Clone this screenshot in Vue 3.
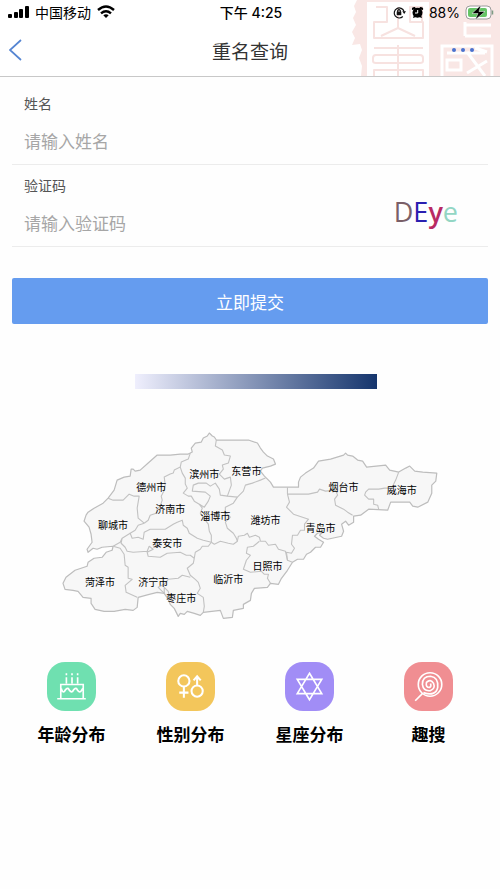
<template>
  <div class="page">
    <header class="header">
      <svg class="seal" viewBox="0 0 160 76" aria-hidden="true">
        <path d="M23 0H160V76H21L22 66L19 58L22 50L20 44L12 45L15 38L12 32L16 25L13 18L16 12L14 6L17 0Z" fill="#f9e7e5" />
        <path d="M27 2H89V76H27Z" fill="#fff" />
        <g fill="none" stroke="#f7e2e0" stroke-width="2" stroke-linejoin="round">
          <path d="M36 7H47V22H34V38H83V22H70V7H82V22M58 7V28L41 36M58 28L75 36" />
          <path d="M34 48H83M58 45V76M36 55H80Q83 55 83 58V61Q83 63 80 63H36Q33 63 33 61V58Q33 55 36 55M34 76V70H83V76" />
        </g>
        <g fill="none" stroke="#fff" stroke-width="3">
          <path d="M125 22V36M125 25H151M125 36H151" />
          <path d="M102 76V46H152V76M107 53H145M107 60H121V70H107ZM127 52L145 76M147 61L127 73M135 48L147 52" />
        </g>
      </svg>

      <div class="status">
        <div class="status-left">
          <svg width="21" height="14" viewBox="0 0 21 14" aria-hidden="true">
            <rect x="0" y="9" width="4" height="4" rx="1" />
            <rect x="6" y="7" width="4" height="6" rx="1" />
            <rect x="11" y="4" width="4" height="9" rx="1" />
            <rect x="17" y="1" width="4" height="12" rx="1" />
          </svg>
          <span>中国移动</span>
          <svg width="18" height="14" viewBox="0 0 18 14" fill="none" stroke="#000" stroke-width="2.4" aria-hidden="true">
            <path d="M1 5Q9-2 17 5M4 8.3Q9 4 14 8.3" />
            <path d="M9 13L6.3 10.3Q9 8.3 11.7 10.3Z" fill="#000" stroke="none" />
          </svg>
        </div>
        <div class="status-time">下午 4:25</div>
        <div class="status-right">
          <svg width="13" height="13" viewBox="0 0 13 13" fill="none" stroke="#111" stroke-width="1.2" aria-hidden="true">
            <path d="M9.8 10.5A5 5 0 1 1 11 5.5" />
            <path d="M9.3 5.3H13L11.2 8Z" fill="#111" stroke="none" />
            <rect x="3.7" y="5.6" width="4.6" height="3.6" fill="#111" stroke="none" />
            <path d="M4.7 6V4.6Q6 2.6 7.3 4.6V6" />
          </svg>
          <svg width="13" height="13" viewBox="0 0 13 13" aria-hidden="true">
            <circle cx="6.5" cy="6.8" r="5" />
            <path d="M1 4Q0 1 4 1L5 3ZM12 4Q13 1 9 1L8 3ZM2 12L3 9L5 11ZM11 12L10 9L8 11Z" />
            <path d="M6.7 4V7H4" fill="none" stroke="#fff" />
          </svg>
          <span>88%</span>
          <svg width="29" height="15" viewBox="0 0 29 15" aria-hidden="true">
            <rect x="1" y="1" width="25" height="13" rx="4" fill="#fff" stroke="#9b9b9b" />
            <rect x="3" y="3" width="19" height="9" rx="2" fill="#65c466" />
            <path d="M27.5 5.5V9.5" stroke="#7d9c84" stroke-width="1.5" />
            <path d="M16 0L7 8.5H13L10 15L20 6.5H14Z" stroke="#fff" stroke-width=".5" />
          </svg>
        </div>
      </div>

      <div class="nav">
        <button class="nav-btn" type="button" aria-label="返回">
          <svg width="14" height="22" viewBox="0 0 14 22" fill="none" stroke="#5585d2" stroke-width="1.7" aria-hidden="true">
            <path d="M12 1L1 11L12 21" />
          </svg>
        </button>
        <h1>重名查询</h1>
        <button class="nav-btn more" type="button" aria-label="更多">
          <svg width="24" height="6" viewBox="0 0 24 6" fill="#4a72cf" aria-hidden="true">
            <circle cx="3" cy="3" r="2" />
            <circle cx="12" cy="3" r="2" />
            <circle cx="21" cy="3" r="2" />
          </svg>
        </button>
      </div>
    </header>

    <main>
      <form @submit.prevent>
        <div class="field">
          <label for="name">姓名</label>
          <input id="name" v-model="name" type="text" placeholder="请输入姓名" />
        </div>
        <div class="field code-field">
          <div class="field-main">
            <label for="code">验证码</label>
            <input id="code" v-model="code" type="text" placeholder="请输入验证码" />
          </div>
          <button class="captcha" type="button">
            <span class="c1">D</span><span class="c2">E</span><span class="c3">y</span><span class="c4">e</span>
          </button>
        </div>
        <button class="submit" type="submit">立即提交</button>
      </form>

      <div class="legend">
        <div class="legend-bar"></div>
      </div>

      <svg class="map" viewBox="60 425 380 200" role="img" aria-label="山东省">
        <path class="land" :d="outline" />
        <path v-for="(b, i) in borders" :key="i" class="border" :d="b" />
        <text v-for="c in cities" :key="c.name" :x="c.x" :y="c.y">{{ c.name }}</text>
      </svg>

      <nav class="menu">
        <a v-for="m in menu" :key="m.label" href="#" class="menu-item">
          <span class="menu-icon" :class="m.icon">
            <svg v-if="m.icon === 'cake'" viewBox="0 0 48 48">
              <path d="M10 36H38M13.5 36V22H35.5V36M14 26Q15 30 17 29Q19 25 21 26Q23 30 25 29Q27 25 29 26Q31 30 33 29L35 26M19 21V15M24.5 21V15M30 21V15" />
              <path d="M19 11V13M24.5 11V13M30 11V13" />
            </svg>
            <svg v-else-if="m.icon === 'gender'" viewBox="0 0 48 48">
              <g stroke-width="2">
                <circle cx="17.5" cy="18.5" r="5.5" />
                <circle cx="30.5" cy="28.5" r="5.5" />
                <path d="M17.5 24V35M13 30H22M30.5 23V15M27 18L30.5 14L34 18" />
              </g>
            </svg>
            <svg v-else-if="m.icon === 'star'" viewBox="0 0 48 48">
              <path d="M24 11L36 31H12ZM24 37L12 17H36Z" />
            </svg>
            <svg v-else viewBox="0 0 48 48">
              <circle cx="25.5" cy="22" r="11.5" />
              <path d="M18 31L11 38M19 30Q31 34 33 25Q34 15 26 14Q18 14 18 22Q19 29 26 28Q31 26 29 21Q26 16 22 20Q21 25 25 25Q27 24 26 21" />
            </svg>
          </span>
          <span class="menu-label">{{ m.label }}</span>
        </a>
      </nav>
    </main>
  </div>
</template>

<script setup>
import { ref } from 'vue'

const name = ref('')
const code = ref('')

const outline =
  'M157 455L170 455L180 454L188 454L192 452L191 448L195 443L201 442L203 438L207 436L209 433L212 436L214 437L216 440L222 440L248 440L257 443L260 448L263 452L267 456L273 459L275 464L270 466L262 468L260 471L264 476L270 482L273 487L298 487L298 482L300 477L305 473L313 468L318 461L330 459L343 455L345 453L347 455L352 456L357 460L362 461L366 467L385 465L389 470L398 472L405 468L409 466L414 471L422 472L436 473L435 481L431 485L431 493L427 502L417 507L412 506L409 502L390 502L387 510L368 509L360 515L353 516L353 522L348 525L345 521L341 524L343 531L341 536L327 539L323 538L319 535L322 532L317 533L314 536L318 539L323 542L320 547L315 547L310 552L306 554L303 559L297 559L292 562L287 570L281 578L278 584L270 583L267 587L254 588L251 593L250 600L243 604L243 608L233 610L232 617L223 618L220 610L203 612L200 615L194 613L187 611L184 614L180 613L178 616L174 608L170 604L168 599L164 593L157 592L149 594L138 597L137 607L133 610L125 609L114 611L104 611L95 609L91 603L91 598L83 597L78 591L73 590L65 589L63 583L66 577L75 570L87 566L88 562L94 558L102 557L106 552L112 550L113 546L102 547L97 549L93 548L88 552L87 549L92 542L91 534L89 527L84 521L86 515L88 512L94 508L103 503L108 498L114 490L117 480L124 477L130 476L131 469L133 469L135 471L140 470L148 463Z'

const borders = [
  'M108 498L113 500L123 500L129 494L134 496L139 496L137 508L138 518L144 523',
  'M144 523L148 520L150 515L156 513L157 509L160 506L162 500L161 496L164 490L165 485L164 477L170 474L173 473L174 470L180 467L181 462L188 459L190 453',
  'M180 467L182 473L185 478L185 484L187 488L183 493L188 496L191 496L194 501L199 504L204 507L208 501L210 496L205 492L192 491L193 485L198 483L206 483L210 486L215 483L219 489L220 495L227 496',
  'M199 504L202 508L200 513L205 520L208 524L209 531L211 535L211 542',
  'M216 440L215 446L222 450L224 455L230 456L228 463L222 465L223 469L219 474L224 479L230 477L231 485L227 496L237 497L243 491L245 485L252 483L260 480L265 478',
  'M237 497L233 503L225 507L225 512L230 517L225 522L227 528L233 533L236 538L237 541L233 544L228 543L220 541L214 544L211 542',
  'M237 541L238 536L244 535L247 533L249 537L255 535L259 537L260 541L265 541L268 545L275 544L278 549L285 551L287 560L292 562M259 541L253 546L247 547L246 553L250 555L246 560L243 569L250 572L261 571L264 574L268 574L267 578L270 583',
  'M287 560L286 552L291 553L294 548L291 544L292 535L297 535L300 530L304 530L304 524L308 519L302 517L293 514L286 507L289 502L287 494L287 487M287 494L308 494L317 492L319 489L325 491L335 490L337 495L334 499L335 505L343 509L347 512L352 515',
  'M398 472L395 480L391 488L384 488L378 489L368 489L365 492L364 495L368 499L373 499L373 504L377 505L378 509',
  'M144 523L138 525L135 530L130 533L132 538L138 537L143 539L144 532L150 529L158 529L165 529L173 524L177 522L182 520L183 525L187 528L189 533L197 538L203 540L211 542',
  'M130 533L122 538L120 542L113 546M122 538L121 543L125 547L127 551L133 552L147 551L149 546L153 549L147 552L148 556L160 557L167 553L180 552L186 555L190 555L194 558L195 552L200 549L202 546L208 546L211 542M113 546L120 548L124 554L125 565L128 567L128 578L132 579L125 585L126 592L137 597',
  'M194 558L193 563L187 568L190 575L195 579L198 582L200 588L197 593L203 597L204 606L203 612M190 577L182 575L178 578L168 579L164 584L158 587L164 593L164 587L168 591L170 600'
]

const cities = [
  { name: '滨州市', x: 204, y: 478 },
  { name: '东营市', x: 246, y: 475 },
  { name: '德州市', x: 151, y: 491 },
  { name: '烟台市', x: 343, y: 491 },
  { name: '威海市', x: 401, y: 494 },
  { name: '济南市', x: 170, y: 513 },
  { name: '淄博市', x: 215, y: 520 },
  { name: '潍坊市', x: 265, y: 524 },
  { name: '聊城市', x: 113, y: 529 },
  { name: '青岛市', x: 320, y: 532 },
  { name: '泰安市', x: 167, y: 547 },
  { name: '日照市', x: 267, y: 570 },
  { name: '菏泽市', x: 100, y: 586 },
  { name: '济宁市', x: 153, y: 586 },
  { name: '临沂市', x: 228, y: 583 },
  { name: '枣庄市', x: 181, y: 602 }
]

const menu = [
  { label: '年龄分布', icon: 'cake' },
  { label: '性别分布', icon: 'gender' },
  { label: '星座分布', icon: 'star' },
  { label: '趣搜', icon: 'candy' }
]
</script>

<style>
body {
  margin: 0;
  background: #fefefe;
}
</style>

<style scoped>
.page {
  font-family: Inter, "Noto Sans CJK SC", sans-serif;
  color: #333;
}
button, input {
  font-family: inherit;
  border: none;
  background: transparent;
  padding: 0;
}
svg { display: block }

.header {
  position: relative;
  background: #fff;
  border-bottom: 1px solid #c8c8c8;
}
.seal {
  position: absolute;
  right: 0;
  top: 0;
  width: 160px;
  height: 100%;
}
.status {
  position: relative;
  display: grid;
  grid-template-columns: 1fr auto 1fr;
  align-items: center;
  height: 24px;
  padding: 0 6px 0 8px;
  font-size: 14px;
  color: #000;
}
.status-left, .status-right {
  display: flex;
  align-items: center;
  gap: 6px;
}
.status-right { justify-content: flex-end; gap: 5px }
.status-time { font-weight: 500 }
.nav {
  position: relative;
  display: grid;
  grid-template-columns: 1fr auto 1fr;
  align-items: center;
  height: 52px;
  padding: 0 9px;
}
.nav-btn {
  display: flex;
  align-items: center;
  width: 44px;
  height: 44px;
  cursor: pointer;
}
.nav-btn.more {
  width: 40px;
  justify-self: end;
}
h1 {
  margin: 0;
  font-size: 19px;
  font-weight: 400;
}

main { padding: 0 12px }
.field {
  padding: 16px 12px 7px;
  border-bottom: 1px solid #ececec;
}
.code-field {
  display: flex;
  align-items: center;
  padding-top: 10px;
}
.field-main { flex: 1 }
label {
  display: block;
  line-height: 22px;
  font-size: 14px;
  color: #555;
}
input {
  display: block;
  width: 100%;
  height: 30px;
  margin-top: 12px;
  font-size: 17px;
  color: #333;
  outline: none;
}
input::placeholder { color: #a6a6a6; opacity: 1 }
.captcha {
  display: flex;
  margin-top: 10px;
  margin-right: 18px;
  font-family: "Open Sans", sans-serif;
  font-size: 27px;
  line-height: 40px;
  cursor: pointer;
}
.c1 { color: #7a5f68 }
.c2 { color: #2a20b0 }
.c3 { color: #b82a63; font-weight: 600 }
.c4 { color: #93d6c4 }
.submit {
  display: block;
  width: 100%;
  height: 46px;
  margin-top: 31px;
  border-radius: 2px;
  background: #659cef;
  color: #fff;
  font-size: 17px;
  cursor: pointer;
}

.legend {
  padding: 50px 0 36px 12px;
}
.legend-bar {
  width: 52%;
  height: 15px;
  margin: 0 auto;
  background: linear-gradient(90deg, #efeffd, #15356d);
}
.map {
  width: 80%;
  margin: 0 auto;
}
.land { fill: #f7f7f7; stroke: #bdbdbd; stroke-width: 1.2; stroke-linejoin: round }
.border { fill: none; stroke: #c2c2c2; stroke-width: 1.1; stroke-linejoin: round }
.map text {
  font-size: 10px;
  fill: #000;
  text-anchor: middle;
}

.menu {
  display: grid;
  grid-template-columns: repeat(4, 1fr);
  margin-top: 37px;
}
.menu-item {
  display: flex;
  flex-direction: column;
  align-items: center;
  gap: 12px;
  color: #000;
  text-decoration: none;
}
.menu-icon {
  width: 49px;
  height: 49px;
  border-radius: 18px;
}
.menu-icon svg {
  fill: none;
  stroke: #fff;
  stroke-width: 1.6;
}
.cake { background: #6fe0b0 }
.gender { background: #f3c65b }
.star { background: #a18df6 }
.candy { background: #f08e92 }
.menu-label {
  font-size: 17px;
  line-height: 24px;
  font-weight: 600;
}
</style>
